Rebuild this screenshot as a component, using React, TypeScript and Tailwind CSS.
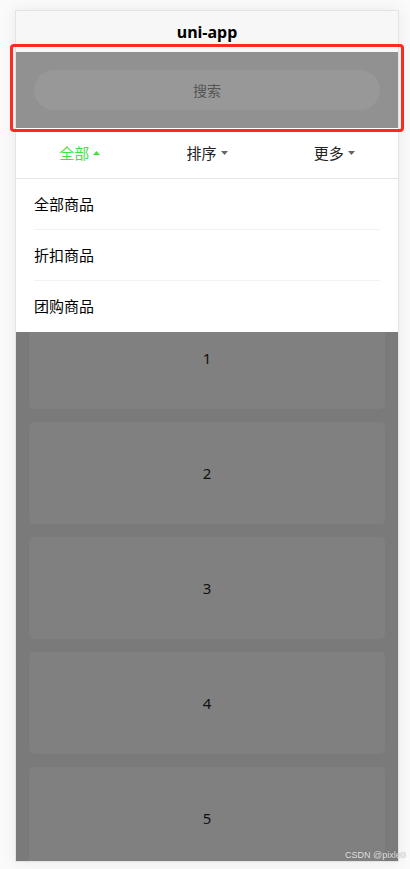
import React from "react";

const font = { fontFamily: '"Noto Sans", "Noto Sans CJK SC", sans-serif' };

function Caret({ up, color }: { up?: boolean; color: string }) {
  return (
    <svg width="7" height="4" viewBox="0 0 7 4" className="ml-[4px]">
      {up ? <polygon points="0,4 7,4 3.5,0" fill={color} /> : <polygon points="0,0 7,0 3.5,4" fill={color} />}
    </svg>
  );
}

export default function App() {
  const cards = [1, 2, 3, 4, 5];
  return (
    <div className="relative w-[410px] h-[869px] overflow-hidden bg-[#fafafa]" style={font}>
      <div className="ml-[15px] mt-[10px] w-[384px] h-[852px] border border-[#e3e3e3] bg-white shadow-[0_0_14px_rgba(0,0,0,0.07)] flex flex-col overflow-hidden">
        <div className="h-[41px] shrink-0 bg-[#f7f7f7] flex items-center justify-center">
          <span className="text-[16px] font-bold text-black leading-none">uni-app</span>
        </div>
        <div className="h-[76px] shrink-0 bg-[#919191] px-[18px] flex items-center">
          <div className="h-[40px] w-full rounded-full bg-[#989898] flex items-center justify-center">
            <span className="text-[14px] text-[#555]">搜索</span>
          </div>
        </div>
        <div className="h-[51px] shrink-0 flex border-b border-[#e5e5e5] bg-white">
          <div className="flex-1 flex items-center justify-center text-[15px] text-[#3ee53e]">
            全部
            <Caret up color="#3ee53e" />
          </div>
          <div className="flex-1 flex items-center justify-center text-[15px] text-[#222]">
            排序
            <Caret color="#666" />
          </div>
          <div className="flex-1 flex items-center justify-center text-[15px] text-[#222]">
            更多
            <Caret color="#666" />
          </div>
        </div>
        <div className="shrink-0 bg-white px-[18px]">
          {["全部商品", "折扣商品", "团购商品"].map((t, i) => (
            <div
              key={t}
              className={`h-[51px] flex items-center text-[15px] text-black ${i < 2 ? "border-b border-[#f2f2f2]" : ""}`}
            >
              {t}
            </div>
          ))}
        </div>
        <div className="flex-1 bg-[#7a7a7a] overflow-hidden px-[13px]">
          <div className="-mt-[25px] flex flex-col gap-[13px]">
            {cards.map((n) => (
              <div key={n} className="h-[102px] shrink-0 rounded-[5px] bg-[#808080] flex items-center justify-center text-[15px] text-[#111]">
                {n}
              </div>
            ))}
          </div>
        </div>
      </div>
      <div className="absolute left-[10px] top-[44px] w-[394px] h-[88px] border-[3px] border-[#ff2a1f] rounded-[4px] pointer-events-none" />
      <div
        className="absolute left-[345px] top-[851px] text-[9px] text-[#e8e8e8] leading-none [text-shadow:0_0_1px_rgba(0,0,0,0.35)]"
        style={{ fontFamily: '"Liberation Sans", sans-serif' }}
      >
        CSDN @pixle0
      </div>
    </div>
  );
}
